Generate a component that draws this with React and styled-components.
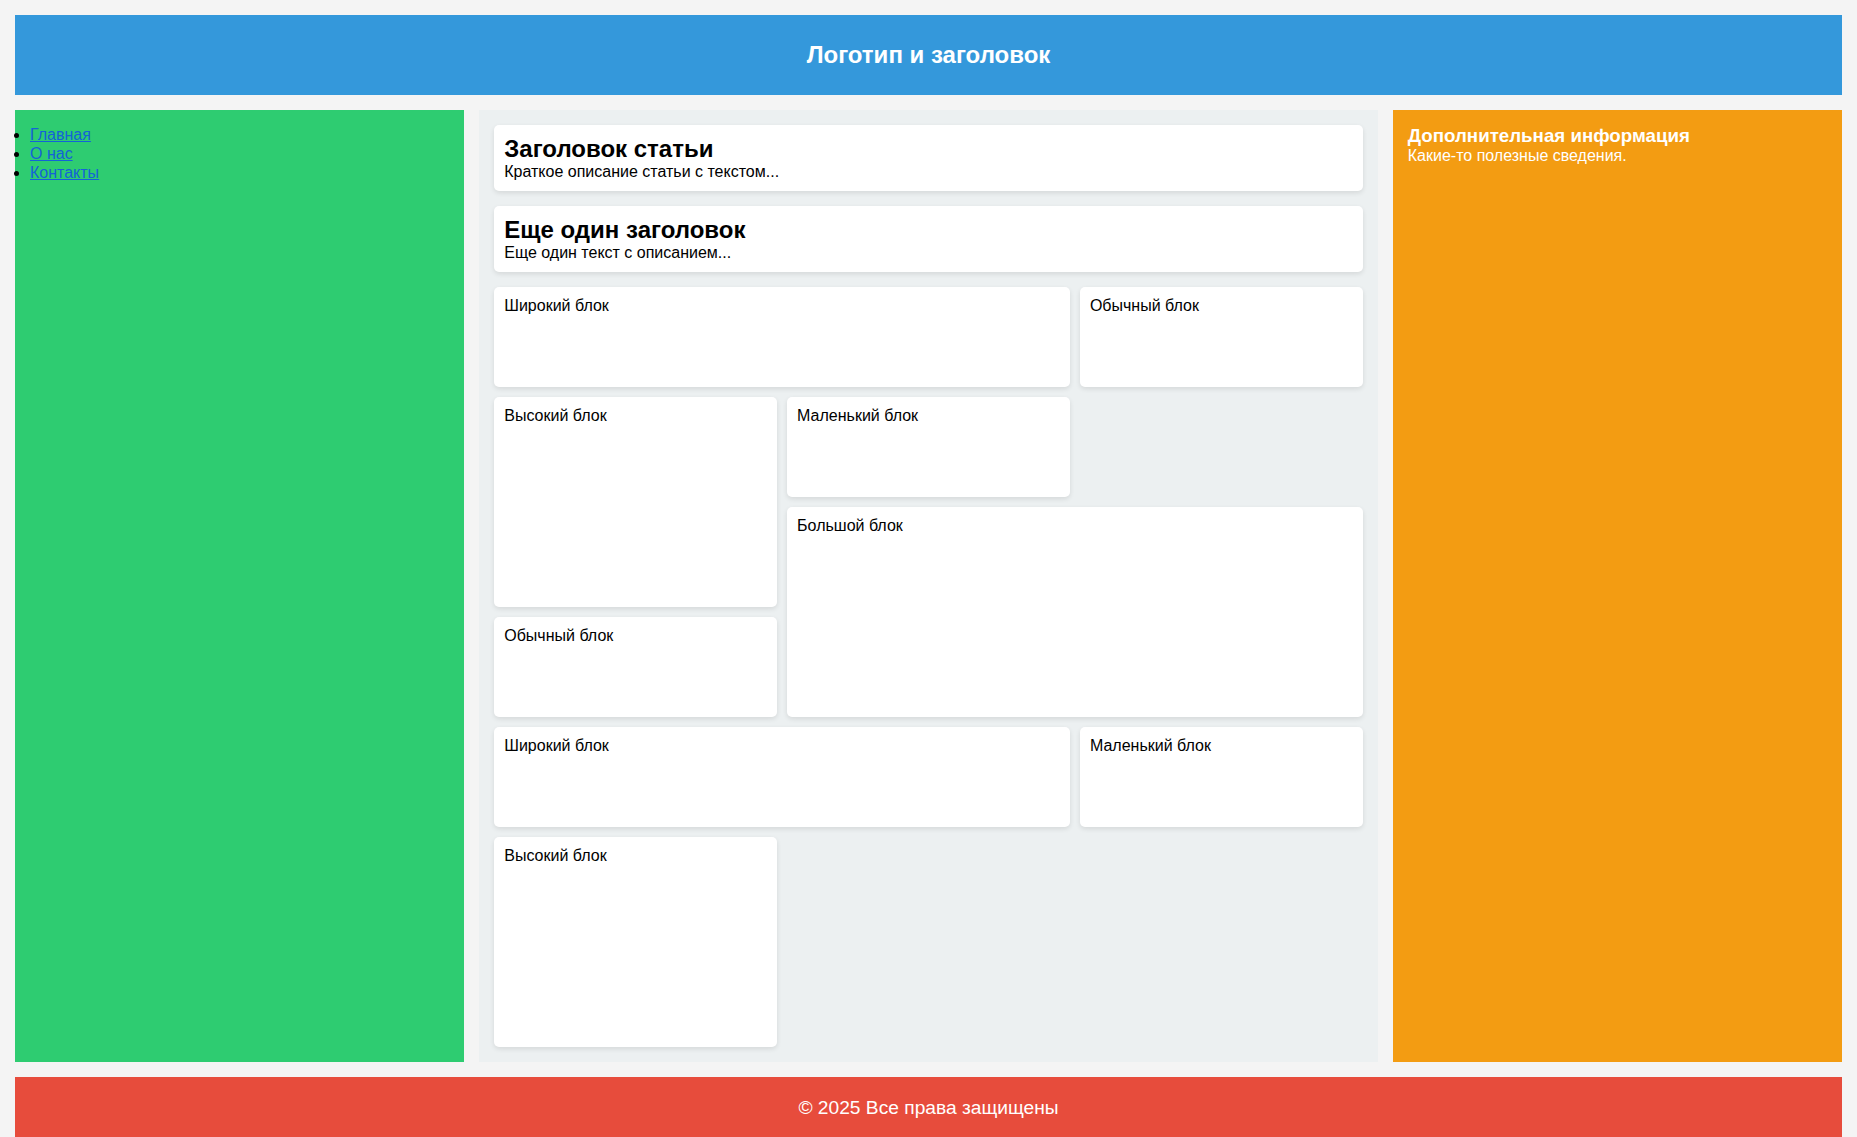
import React from "react";
import styled, { createGlobalStyle } from "styled-components";

const GlobalStyle = createGlobalStyle`
  body {
    margin: 0;
    font-family: "Liberation Sans", Arial, sans-serif;
    background: #f4f4f4;
  }
`;

const blocks = [
  { label: "Широкий блок", cols: 2, rows: 1 },
  { label: "Обычный блок", cols: 1, rows: 1 },
  { label: "Высокий блок", cols: 1, rows: 2 },
  { label: "Маленький блок", cols: 1, rows: 1 },
  { label: "Большой блок", cols: 2, rows: 2 },
  { label: "Обычный блок", cols: 1, rows: 1 },
  { label: "Широкий блок", cols: 2, rows: 1 },
  { label: "Маленький блок", cols: 1, rows: 1 },
  { label: "Высокий блок", cols: 1, rows: 2 },
];

export default function App() {
  return (
    <>
      <GlobalStyle />
      <Layout>
        <Header>
          <h1>Логотип и заголовок</h1>
        </Header>
        <Nav>
          <ul>
            <li><a href="#">Главная</a></li>
            <li><a href="#">О нас</a></li>
            <li><a href="#">Контакты</a></li>
          </ul>
        </Nav>
        <Main>
          <Article>
            <h2>Заголовок статьи</h2>
            <p>Краткое описание статьи с текстом...</p>
          </Article>
          <Article>
            <h2>Еще один заголовок</h2>
            <p>Еще один текст с описанием...</p>
          </Article>
          <BlockGrid>
            {blocks.map((b, i) => (
              <Block key={i} $cols={b.cols} $rows={b.rows}>
                {b.label}
              </Block>
            ))}
          </BlockGrid>
        </Main>
        <Aside>
          <h3>Дополнительная информация</h3>
          <p>Какие-то полезные сведения.</p>
        </Aside>
        <Footer>© 2025 Все права защищены</Footer>
      </Layout>
    </>
  );
}

const Layout = styled.div`
  display: grid;
  grid-template-columns: 1fr 2fr 1fr;
  grid-template-areas:
    "header header header"
    "nav main aside"
    "footer footer footer";
  gap: 15px;
  padding: 15px;
`;

const Header = styled.header`
  grid-area: header;
  background: #3498db;
  color: #fff;
  height: 80px;
  display: flex;
  align-items: center;
  justify-content: center;
  h1 {
    margin: 0;
    font-size: 24px;
  }
`;

const Nav = styled.nav`
  grid-area: nav;
  background: #2ecc71;
  padding: 15px;
  ul {
    margin: 0;
    padding: 0;
    line-height: 19px;
  }
  a {
    color: #1462d8;
  }
`;

const Main = styled.main`
  grid-area: main;
  background: #ecf0f1;
  padding: 15px;
`;

const Article = styled.article`
  background: #fff;
  border-radius: 5px;
  box-shadow: 0 2px 5px rgba(0, 0, 0, 0.1);
  padding: 10px;
  margin-bottom: 15px;
  h2 {
    margin: 0;
    font-size: 24px;
  }
  p {
    margin: 0;
    font-size: 16px;
  }
`;

const BlockGrid = styled.div`
  display: grid;
  grid-template-columns: repeat(3, 1fr);
  grid-auto-rows: 100px;
  gap: 10px;
`;

const Block = styled.div`
  background: #fff;
  border-radius: 5px;
  box-shadow: 0 2px 5px rgba(0, 0, 0, 0.1);
  padding: 10px;
  font-size: 16px;
  grid-column: span ${(p) => p.$cols};
  grid-row: span ${(p) => p.$rows};
`;

const Aside = styled.aside`
  grid-area: aside;
  background: #f39c12;
  color: #fff;
  padding: 15px;
  h3 {
    margin: 0;
    font-size: 18.72px;
  }
  p {
    margin: 0;
    font-size: 16px;
  }
`;

const Footer = styled.footer`
  grid-area: footer;
  background: #e74c3c;
  color: #fff;
  text-align: center;
  padding: 20px;
  height: 40px;
  font-size: 19.2px;
`;
